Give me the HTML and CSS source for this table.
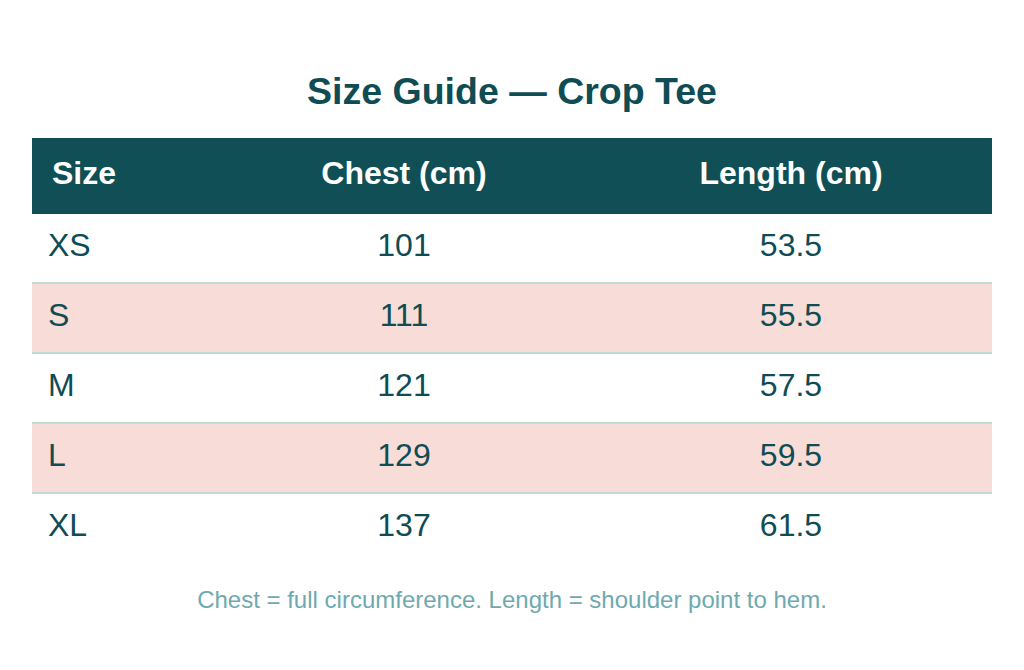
FILE: index.html
```html
<!DOCTYPE html>
<html lang="en">
<head>
<meta charset="utf-8">
<title>Size Guide — Crop Tee</title>
<link rel="stylesheet" href="styles.css">
</head>
<body>
<main class="page">
  <h1 class="title">Size Guide — Crop Tee</h1>
  <table class="sizes">
    <colgroup>
      <col class="c-size">
      <col class="c-chest">
      <col class="c-length">
    </colgroup>
    <thead>
      <tr><th class="left">Size</th><th>Chest (cm)</th><th>Length (cm)</th></tr>
    </thead>
    <tbody>
      <tr><td class="left">XS</td><td>101</td><td>53.5</td></tr>
      <tr class="alt"><td class="left">S</td><td>111</td><td>55.5</td></tr>
      <tr><td class="left">M</td><td>121</td><td>57.5</td></tr>
      <tr class="alt"><td class="left">L</td><td>129</td><td>59.5</td></tr>
      <tr><td class="left">XL</td><td>137</td><td>61.5</td></tr>
    </tbody>
  </table>
  <p class="note">Chest = full circumference. Length = shoulder point to hem.</p>
</main>
</body>
</html>
```

FILE: styles.css
```css
html, body {
  margin: 0;
  padding: 0;
  background: #ffffff;
}

body {
  font-family: "Liberation Sans", Arial, sans-serif;
  color: #0f4c54;
}

.page {
  padding: 70px 32px 0;
}

.title {
  margin: 0 0 26px;
  font-size: 37.5px;
  font-weight: 700;
  line-height: 42px;
  text-align: center;
  color: #0f4c54;
}

.sizes {
  width: 960px;
  border-collapse: collapse;
  table-layout: fixed;
}

.c-size { width: 186px; }
.c-chest { width: 372px; }
.c-length { width: 402px; }

.sizes th {
  height: 70px;
  padding: 0 20px 6px;
  background: #0f4f55;
  color: #ffffff;
  font-size: 32px;
  font-weight: 700;
  text-align: center;
}

.sizes td {
  height: 62px;
  padding: 0 16px 6px;
  font-size: 32px;
  text-align: center;
  color: #0f4c54;
  border-bottom: 2px solid #c3dcd3;
}

.sizes tbody tr:last-child td {
  border-bottom: none;
}

.sizes .left {
  text-align: left;
}

.sizes tr.alt td {
  background: #f7dcd7;
}

.note {
  margin: 24px 0 0;
  text-align: center;
  font-size: 24px;
  color: #6fa9b0;
}
```
